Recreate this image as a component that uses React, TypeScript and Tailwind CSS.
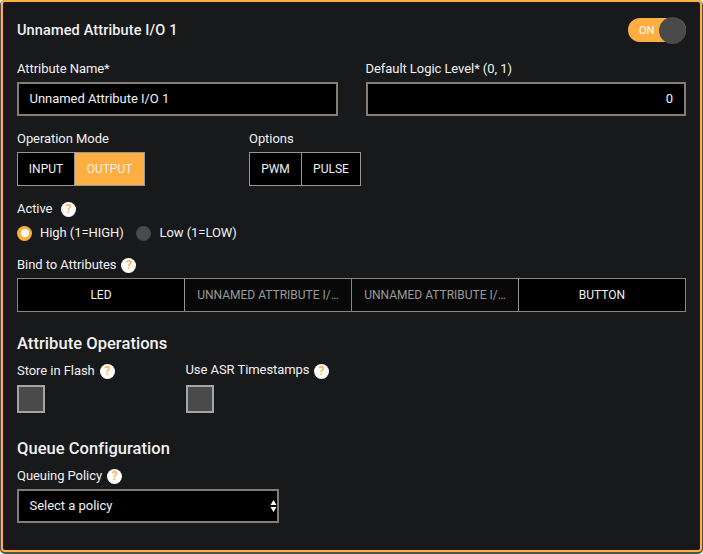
import React from "react";

function Help({ className = "" }: { className?: string }) {
  return (
    <span
      className={`flex h-[15px] w-[15px] shrink-0 items-center justify-center rounded-full bg-white text-[12.5px] leading-none font-medium text-[#ffae42] ${className}`}
    >
      ?
    </span>
  );
}

function Label({ children, className = "" }: { children: React.ReactNode; className?: string }) {
  return (
    <div className={`flex h-[18px] items-center text-[13px] tracking-[-0.06px] whitespace-nowrap ${className}`}>{children}</div>
  );
}

const seg = "flex h-full items-center justify-center text-[12px] whitespace-nowrap";

export default function App() {
  return (
    <div className="h-[554px] w-[703px] overflow-hidden bg-white font-['Roboto',sans-serif] text-[#f1f1f1]">
      <div className="h-[554px] rounded-[5px] bg-[#55504c] pr-px pb-[2px] pl-px">
        <div className="flex h-[552px] flex-col rounded-[4px] border-2 border-[#ffae42] bg-[#18191b] px-[14px]">
          <div className="mt-[14px] flex h-[28px] items-center justify-between">
            <h1 className="pt-[2px] text-[14.5px] font-medium tracking-[0.13px]">Unnamed Attribute I/O 1</h1>
            <div className="flex h-[24px] w-[58px] items-center justify-between rounded-full bg-[#ffae42] pl-[11px]">
              <span className="pt-[2px] text-[11px] text-white">ON</span>
              <span className="h-[27px] w-[27px] shrink-0 rounded-full bg-[#4a4a4a]" />
            </div>
          </div>

          <div className="mt-[16px] grid grid-cols-2 gap-[28px]">
            <div>
              <Label>Attribute Name*</Label>
              <div className="mt-[4px] flex h-[34px] items-center border-2 border-[#857c75] bg-black pl-[10.5px] text-[13px] tracking-[-0.03px]">
                Unnamed Attribute I/O 1
              </div>
            </div>
            <div>
              <Label>Default Logic Level* (0, 1)</Label>
              <div className="mt-[4px] flex h-[34px] items-center justify-end border-2 border-[#857c75] bg-black pr-[11px] text-[13px]">0</div>
            </div>
          </div>

          <div className="mt-[14px] flex">
            <div className="w-[232px]">
              <Label>Operation Mode</Label>
              <div className="mt-[4px] flex h-[34px] w-[128px] border border-[#969696]">
                <div className={`${seg} w-[57px] border-r border-[#969696] bg-black`}>INPUT</div>
                <div className={`${seg} flex-1 bg-[#ffae42]`}>OUTPUT</div>
              </div>
            </div>
            <div>
              <Label>Options</Label>
              <div className="mt-[4px] flex h-[34px] w-[112px] border border-[#969696] bg-black">
                <div className={`${seg} w-[52px] border-r border-[#969696]`}>PWM</div>
                <div className={`${seg} flex-1`}>PULSE</div>
              </div>
            </div>
          </div>

          <Label className="mt-[14px]">
            Active
            <Help className="ml-[8.5px]" />
          </Label>
          <div className="mt-[6px] flex h-[18px] items-center text-[13px] tracking-[-0.06px]">
            <span className="flex h-[15px] w-[15px] items-center justify-center rounded-full bg-[#ffae42]">
              <span className="h-[8px] w-[8px] rounded-full bg-white" />
            </span>
            <span className="ml-[8px] w-[96px] whitespace-nowrap">High (1=HIGH)</span>
            <span className="h-[15px] w-[15px] rounded-full bg-[#4a4a4a]" />
            <span className="ml-[8.5px]">Low (1=LOW)</span>
          </div>

          <Label className="mt-[14px]">
            Bind to Attributes
            <Help className="ml-[5px]" />
          </Label>
          <div className="mt-[4px] grid h-[34px] shrink-0 grid-cols-[167px_167px_167px_1fr] border border-[#858585] bg-black">
            <div className={`${seg} border-r border-[#969696]`}>LED</div>
            <div className={`${seg} border-r border-[#858585] bg-[#080808] text-[#9a9a9a]`}>UNNAMED ATTRIBUTE I/…</div>
            <div className={`${seg} border-r border-[#969696] bg-[#080808] text-[#9a9a9a]`}>UNNAMED ATTRIBUTE I/…</div>
            <div className={seg}>BUTTON</div>
          </div>

          <h2 className="mt-[20px] flex h-[24px] items-center pt-px text-[16.5px] font-medium tracking-[0.05px]">Attribute Operations</h2>
          <div className="mt-[6px] flex">
            <div className="w-[168.5px]">
              <Label>
                Store in Flash
                <Help className="ml-[5px]" />
              </Label>
              <div className="mt-[5px] h-[28px] w-[28px] border-2 border-[#a5a5a5] bg-[#4a4a4a]" />
            </div>
            <div>
              <Label>
                <span className="-mt-[2px]">Use ASR Timestamps</span>
                <Help className="ml-[4.5px]" />
              </Label>
              <div className="mt-[5px] h-[28px] w-[28px] border-2 border-[#a5a5a5] bg-[#4a4a4a]" />
            </div>
          </div>

          <h2 className="mt-[24px] flex h-[24px] items-center text-[16.5px] font-medium tracking-[0.05px]">Queue Configuration</h2>
          <Label className="mt-[6px]">
            Queuing Policy
            <Help className="ml-[5px]" />
          </Label>
          <div className="mt-[4px] flex h-[34px] w-[262px] items-center justify-between border-2 border-[#857c75] bg-black pl-[10.5px] text-[13px] tracking-[-0.03px]">
            Select a policy
            <svg width="7" height="12" viewBox="0 0 7 12" fill="white">
              <path d="M3.5 0 6.5 5H.5ZM3.5 12 .5 7h6Z" />
            </svg>
          </div>
        </div>
      </div>
    </div>
  );
}
